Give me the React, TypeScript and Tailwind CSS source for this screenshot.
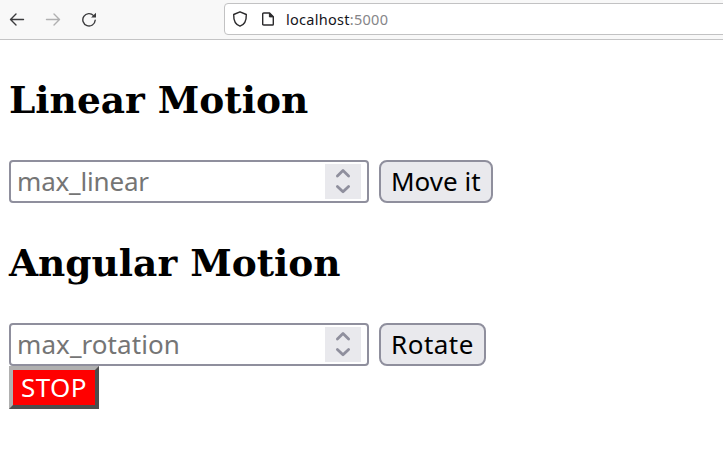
import React from 'react';

const ui = "font-['Noto_Sans','Open_Sans',sans-serif]";

function Toolbar() {
  return (
    <header className={`flex h-10 items-start border-b border-[#c4c4c5] bg-[#f8f8f8] pt-[3px] ${ui}`}>
      <div className="flex h-8 w-[224px] shrink-0 items-center gap-5 pl-[9px]">
        <svg width="16" height="16" viewBox="0 0 16 16" fill="none" stroke="#3b3b3d" strokeWidth="1.4" strokeLinecap="round" strokeLinejoin="round">
          <path d="M14.5 8.5H1.5M7 3L1.5 8.5L7 14" />
        </svg>
        <svg width="16" height="16" viewBox="0 0 16 16" fill="none" stroke="#b0b0b1" strokeWidth="1.4" strokeLinecap="round" strokeLinejoin="round">
          <path d="M1.5 8.5H14.5M9 3L14.5 8.5L9 14" />
        </svg>
        <svg width="16" height="16" viewBox="0 0 16 16" fill="none" stroke="#3b3b3d" strokeWidth="1.4" strokeLinecap="round">
          <path d="M12.6 4.6A6.2 6.2 0 1 0 14.2 9.3" />
          <path d="M15 1.7V6.6H10.1Z" fill="#3b3b3d" stroke="none" />
        </svg>
      </div>
      <div className="-mr-1 flex h-8 flex-1 items-center rounded-[4px] border border-[#c2c2c3] bg-white pl-[7px]">
        <svg className="mb-px" width="16" height="16" viewBox="0 0 16 16" fill="none" stroke="#2b2a2c" strokeWidth="1.4" strokeLinejoin="round">
          <path d="M8 .8L14.3 3.5C14.5 9 12.3 13.7 8 15.2C3.7 13.7 1.5 9 1.7 3.5Z" />
        </svg>
        <svg className="mb-px ml-3" width="16" height="16" viewBox="0 0 16 16" fill="none" stroke="#2b2a2c" strokeWidth="1.4" strokeLinejoin="round">
          <path d="M3.7 2H9.6L13.3 5.7V13.2Q13.3 14 12.5 14H3.7Q2.7 14 2.7 13.2V2.9Q2.7 2 3.7 2Z" />
          <path d="M9.4 2.2V5.9H13.1Z" fill="#2b2a2c" strokeWidth="1" />
        </svg>
        <span className="mb-px ml-[10px] whitespace-nowrap text-[14.5px] leading-5 tracking-[0.28px] text-[#15141a]">
          localhost<span className="text-[#858588]">:5000</span>
        </span>
      </div>
    </header>
  );
}

function NumberField({ label, tracking }: { label: string; tracking: string }) {
  return (
    <div className="flex h-[43px] w-[360px] items-center justify-between rounded-[4px] border-2 border-[#8f8f9d] bg-white pr-[6px] pl-[6px]">
      <span className={`text-[26px] leading-[35px] text-[#757575] ${tracking}`}>{label}</span>
      <div className="flex h-[35px] w-9 items-center justify-center bg-[#e9e9ed]">
        <svg width="18" height="27" viewBox="0 0 18 27" fill="none" stroke="#8f8f9d" strokeWidth="2.8" strokeLinecap="round" strokeLinejoin="round">
          <path d="M3.4 8L9 2.6L14.6 8M3.4 18.4L9 23.8L14.6 18.4" />
        </svg>
      </div>
    </div>
  );
}

function ActionButton({ label, style }: { label: string; style: string }) {
  return (
    <button className={`flex h-[43px] items-center rounded-[8px] border-2 border-[#8f8f9d] bg-[#e9e9ed] pl-[10px] text-[26px] leading-[35px] whitespace-nowrap text-black ${style}`}>
      {label}
    </button>
  );
}

const heading = "font-['DejaVu_Serif',serif] text-[37.5px] leading-[44px] font-bold text-black whitespace-nowrap";

export default function App() {
  return (
    <div className="h-[468px] w-full overflow-hidden bg-white">
      <Toolbar />
      <main className={`pt-[38px] pl-[9px] ${ui}`}>
        <h2 className={heading}>Linear Motion</h2>
        <div className="mt-[38px] flex gap-[10px]">
          <NumberField label="max_linear" tracking="tracking-[-0.18px]" />
          <ActionButton label="Move it" style="w-[114px] tracking-[0px]" />
        </div>
        <h2 className={`mt-[38px] ${heading}`}>Angular Motion</h2>
        <div className="mt-[38px] flex gap-[10px]">
          <NumberField label="max_rotation" tracking="tracking-[0.08px]" />
          <ActionButton label="Rotate" style="w-[107px] tracking-[0.5px]" />
        </div>
        <button className="flex h-[43px] w-[90px] items-center border-4 border-t-[#b0b0b0] border-r-[#4d4d4d] border-b-[#4d4d4d] border-l-[#b0b0b0] bg-[#ff0000] pl-[8px] text-[26px] leading-[35px] tracking-[0.4px] text-white">
          STOP
        </button>
      </main>
    </div>
  );
}
